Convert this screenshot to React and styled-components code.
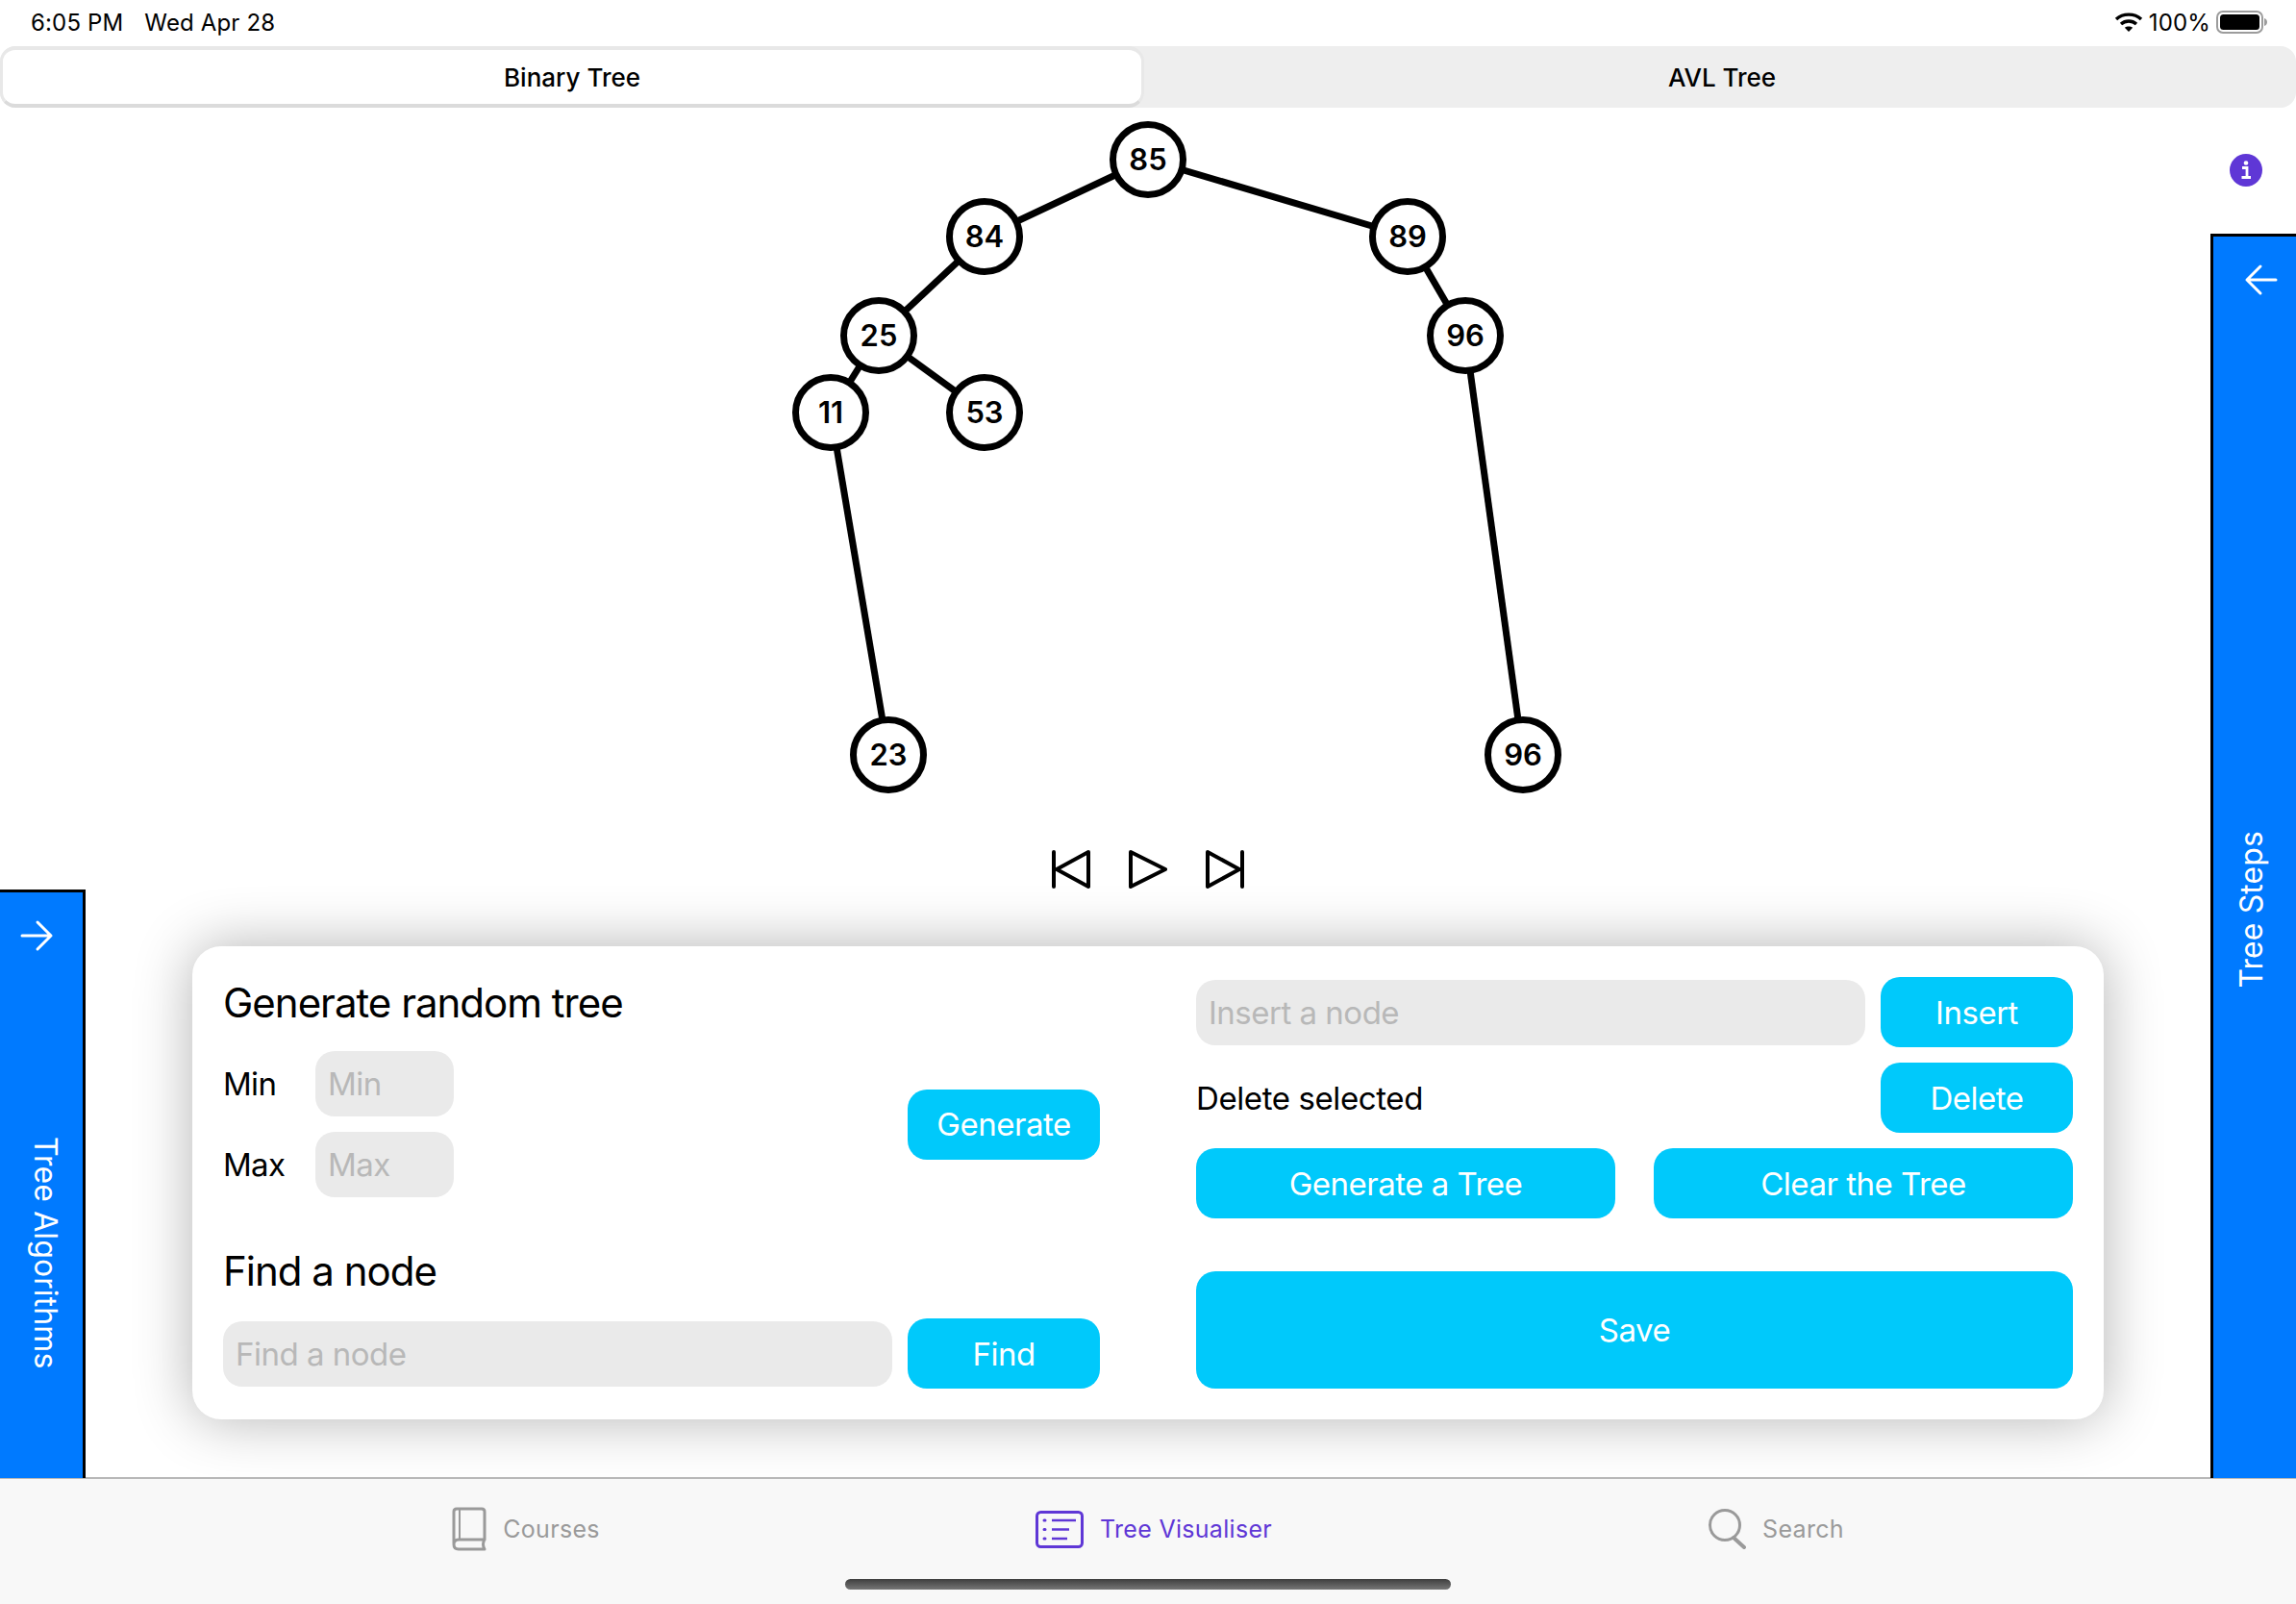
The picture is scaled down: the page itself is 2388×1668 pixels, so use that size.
import React from 'react';
import styled, { createGlobalStyle } from 'styled-components';

const TOP = 112;

const NODES = [
  { id: 'a', label: 85, x: 1194, y: 166 },
  { id: 'b', label: 84, x: 1024, y: 246 },
  { id: 'c', label: 89, x: 1464, y: 246 },
  { id: 'd', label: 25, x: 914, y: 349 },
  { id: 'e', label: 96, x: 1524, y: 349 },
  { id: 'f', label: 11, x: 864, y: 429 },
  { id: 'g', label: 53, x: 1024, y: 429 },
  { id: 'h', label: 23, x: 924, y: 785 },
  { id: 'i', label: 96, x: 1584, y: 785 },
];

const EDGES = [
  ['a', 'b'], ['a', 'c'], ['b', 'd'], ['c', 'e'],
  ['d', 'f'], ['d', 'g'], ['f', 'h'], ['e', 'i'],
];

const nodeById = (id) => NODES.find((n) => n.id === id);

const GlobalStyle = createGlobalStyle`
  html, body {
    margin: 0;
    padding: 0;
    background: #fff;
    overflow: hidden;
  }
  body {
    font-family: Inter, "Liberation Sans", sans-serif;
    color: #000;
  }
  * { box-sizing: border-box; }
`;

const Screen = styled.div`
  position: relative;
  width: 2388px;
  height: 1668px;
  display: flex;
  flex-direction: column;
  overflow: hidden;
  background: #fff;
`;

const StatusBar = styled.div`
  height: 48px;
  padding: 0 29px 2px 32px;
  display: flex;
  align-items: center;
  font-size: 24px;
  letter-spacing: 0.15px;
`;

const StatusTime = styled.span`
  margin-right: 22px;
`;

const StatusRight = styled.div`
  margin-left: auto;
  display: flex;
  align-items: center;
  gap: 6px;
`;

const Tabs = styled.div`
  height: 64px;
  display: grid;
  grid-template-columns: 1fr 1fr;
  background: #eeeeee;
  border-radius: 16px;
`;

const Tab = styled.div`
  display: flex;
  align-items: center;
  justify-content: center;
  font-size: 26px;
  font-weight: 500;
  ${(p) => p.$active && `
    margin-right: 4px;
    background: #fff;
    border-radius: 16px;
    border: 3px solid #e8e8e8;
    border-top-width: 4px;
    border-bottom: 4px solid #dbdbdb;
  `}
`;

const Main = styled.main`
  flex: 1;
  display: flex;
  flex-direction: column;
  min-height: 0;
`;

const Canvas = styled.div`
  position: relative;
  height: 769px;
`;

const Edges = styled.svg`
  position: absolute;
  inset: 0;
  width: 100%;
  height: 100%;
`;

const Node = styled.div`
  position: absolute;
  left: ${(p) => p.$x - 40}px;
  top: ${(p) => p.$y - TOP - 40}px;
  width: 80px;
  height: 80px;
  padding-bottom: 1px;
  border: 7px solid #000;
  border-radius: 50%;
  background: #fff;
  display: flex;
  align-items: center;
  justify-content: center;
  font-size: 31px;
  font-weight: 600;
`;

const InfoBadge = styled.svg`
  position: absolute;
  left: 2319px;
  top: ${160 - TOP}px;
  width: 34px;
  height: 34px;
`;

const Transport = styled.div`
  height: 46px;
  display: flex;
  justify-content: center;
  gap: 40px;
`;

const TransportIcon = styled.svg`
  width: 40px;
  height: 46px;
  fill: none;
  stroke: #000;
  stroke-width: 4px;
  stroke-linecap: round;
  stroke-linejoin: round;
`;

const Panel = styled.section`
  width: 1988px;
  height: 492px;
  margin: 57px auto 0;
  padding: 32px;
  display: grid;
  grid-template-columns: 912px 912px;
  column-gap: 100px;
  background: #fff;
  border-radius: 30px;
  box-shadow: 0 0 60px rgba(0, 0, 0, 0.3);
`;

const Column = styled.div`
  display: flex;
  flex-direction: column;
`;

const Heading = styled.h2`
  margin: ${(p) => p.$top || 0}px 0 0;
  height: 52px;
  line-height: 54px;
  font-size: 42px;
  font-weight: 400;
  letter-spacing: -1px;
`;

const RangeBlock = styled.div`
  margin-top: 25px;
  display: flex;
  align-items: center;
  justify-content: space-between;
`;

const RangeFields = styled.div`
  display: flex;
  flex-direction: column;
  gap: 16px;
`;

const RangeRow = styled.label`
  display: flex;
  align-items: center;
`;

const RangeLabel = styled.span`
  width: 96px;
  font-size: 33px;
  letter-spacing: -0.7px;
`;

const Field = styled.input`
  flex: ${(p) => (p.$small ? 'none' : 1)};
  width: ${(p) => (p.$small ? '144px' : 'auto')};
  min-width: 0;
  height: 68px;
  padding: 0 13px;
  border: 0;
  outline: 0;
  border-radius: 20px;
  background: #eaeaea;
  font-family: inherit;
  font-size: 33px;
  letter-spacing: -0.5px;
  &::placeholder {
    color: #b8b8b8;
    opacity: 1;
  }
`;

const Button = styled.button`
  flex: none;
  width: ${(p) => (p.$wide ? '100%' : '200px')};
  height: ${(p) => (p.$tall ? '122px' : '73px')};
  padding: 0;
  border: 0;
  border-radius: 20px;
  background: #00c9fb;
  color: #fff;
  font-family: inherit;
  font-size: 33px;
  letter-spacing: -0.5px;
`;

const FieldRow = styled.div`
  margin-top: ${(p) => p.$top || 0}px;
  display: flex;
  align-items: center;
  gap: 16px;
`;

const DeleteLabel = styled.span`
  flex: 1;
  font-size: 33px;
  letter-spacing: -0.4px;
`;

const ButtonPair = styled.div`
  margin-top: 16px;
  display: grid;
  grid-template-columns: 1fr 1fr;
  gap: 40px;
`;

const SaveSlot = styled.div`
  margin-top: 55px;
`;

const Drawer = styled.aside`
  position: absolute;
  display: flex;
  flex-direction: column;
  align-items: center;
  background: #007aff;
  color: #fff;
  border-top: 3px solid #000;
  font-size: 32px;
  ${(p) => p.$side === 'left' ? `
    left: 0;
    top: 925px;
    width: 89px;
    height: 612px;
    padding-top: 25px;
    border-right: 3px solid #000;
  ` : `
    left: 2299px;
    top: 243px;
    width: 89px;
    height: 1294px;
    padding-top: 25px;
    border-left: 3px solid #000;
  `}
`;

const DrawerArrow = styled.svg`
  width: 36px;
  height: 40px;
  fill: none;
  stroke: #fff;
  stroke-width: 3px;
  stroke-linecap: round;
  stroke-linejoin: round;
  margin: ${(p) => (p.$side === 'left' ? '0 10px 0 0' : '0 0 0 14px')};
`;

const DrawerLabel = styled.span`
  writing-mode: vertical-rl;
  white-space: nowrap;
  letter-spacing: 0.1px;
  ${(p) => p.$side === 'left' ? `
    margin: 189px 0 0 8px;
  ` : `
    margin: 553px 8px 0 0;
    transform: rotate(180deg);
  `}
`;

const BottomBar = styled.nav`
  position: relative;
  flex: none;
  height: 132px;
  padding: 0 0 0 221px;
  display: grid;
  grid-template-columns: 652px 654px 640px;
  background: #f8f8f8;
  border-top: 2px solid #b8b8b8;
`;

const BarItem = styled.div`
  height: 104px;
  display: flex;
  align-items: center;
  justify-content: center;
  gap: 17px;
  color: ${(p) => (p.$active ? '#5f37d6' : '#9a9a9a')};
  font-size: 25px;
  letter-spacing: 0.3px;
`;

const BarIcon = styled.svg`
  flex: none;
  width: ${(p) => p.$w}px;
  height: ${(p) => p.$h}px;
  fill: none;
  stroke: currentColor;
  stroke-width: 3px;
  stroke-linecap: round;
  stroke-linejoin: round;
`;

const HomeIndicator = styled.div`
  position: absolute;
  left: 879px;
  bottom: 15px;
  width: 630px;
  height: 11px;
  border-radius: 6px;
  background: linear-gradient(#3e3e3e, #767676);
`;

const WifiIcon = () => (
  <svg width="30" height="22" viewBox="0 0 30 22" fill="none" stroke="#000" strokeWidth="3.4" strokeLinecap="butt">
    <path d="M2 8 C9 1.5 21 1.5 28 8" />
    <path d="M7 13 C11.5 9 18.5 9 23 13" />
    <path d="M15 21 L10.8 16.8 C13 14.9 17 14.9 19.2 16.8 Z" fill="#000" stroke="none" />
  </svg>
);

const BatteryIcon = () => (
  <svg width="54" height="24" viewBox="0 0 54 24">
    <rect x="1" y="1" width="47" height="22" rx="6" fill="none" stroke="#9c9c9c" strokeWidth="2" />
    <rect x="4" y="4" width="41" height="16" rx="3.5" fill="#000" />
    <path d="M50 8 C52.5 9 53 10.5 53 12 C53 13.5 52.5 15 50 16 Z" fill="#9c9c9c" />
  </svg>
);

const App = () => (
  <Screen>
    <GlobalStyle />
    <StatusBar>
      <StatusTime>6:05 PM</StatusTime>
      <span>Wed Apr 28</span>
      <StatusRight>
        <WifiIcon />
        <span>100%</span>
        <BatteryIcon />
      </StatusRight>
    </StatusBar>

    <Tabs>
      <Tab $active>Binary Tree</Tab>
      <Tab>AVL Tree</Tab>
    </Tabs>

    <Main>
      <Canvas>
        <Edges>
          {EDGES.map(([from, to]) => {
            const a = nodeById(from);
            const b = nodeById(to);
            return (
              <line
                key={from + to}
                x1={a.x}
                y1={a.y - TOP}
                x2={b.x}
                y2={b.y - TOP}
                stroke="#000"
                strokeWidth="7"
              />
            );
          })}
        </Edges>
        {NODES.map((n) => (
          <Node key={n.id} $x={n.x} $y={n.y}>{n.label}</Node>
        ))}
        <InfoBadge viewBox="0 0 34 34">
          <circle cx="17" cy="17" r="17" fill="#5f37d6" />
          <circle cx="17" cy="9.5" r="2.3" fill="#fff" />
          <path d="M13 14.5 H18 V24 M12.5 24.5 H22" fill="none" stroke="#fff" strokeWidth="2.8" />
        </InfoBadge>
      </Canvas>

      <Transport>
        <TransportIcon viewBox="0 0 40 46">
          <path d="M2 5 V41 M38 5 L5 23 L38 41 Z" />
        </TransportIcon>
        <TransportIcon viewBox="0 0 40 46">
          <path d="M2 5 L38 23 L2 41 Z" />
        </TransportIcon>
        <TransportIcon viewBox="0 0 40 46">
          <path d="M38 5 V41 M2 5 L35 23 L2 41 Z" />
        </TransportIcon>
      </Transport>

      <Panel>
        <Column>
          <Heading>Generate random tree</Heading>
          <RangeBlock>
            <RangeFields>
              <RangeRow>
                <RangeLabel>Min</RangeLabel>
                <Field $small placeholder="Min" />
              </RangeRow>
              <RangeRow>
                <RangeLabel>Max</RangeLabel>
                <Field $small placeholder="Max" />
              </RangeRow>
            </RangeFields>
            <Button>Generate</Button>
          </RangeBlock>
          <Heading $top={50}>Find a node</Heading>
          <FieldRow $top={24}>
            <Field placeholder="Find a node" />
            <Button>Find</Button>
          </FieldRow>
        </Column>

        <Column>
          <FieldRow>
            <Field placeholder="Insert a node" />
            <Button>Insert</Button>
          </FieldRow>
          <FieldRow $top={16}>
            <DeleteLabel>Delete selected</DeleteLabel>
            <Button>Delete</Button>
          </FieldRow>
          <ButtonPair>
            <Button $wide>Generate a Tree</Button>
            <Button $wide>Clear the Tree</Button>
          </ButtonPair>
          <SaveSlot>
            <Button $wide $tall>Save</Button>
          </SaveSlot>
        </Column>
      </Panel>
    </Main>

    <BottomBar>
      <BarItem>
        <BarIcon $w={36} $h={46} viewBox="0 0 36 46">
          <path d="M2 38 V5 Q2 2 5 2 H31 Q34 2 34 5 V34 H7 Q2 34 2 39 Q2 44 7 44 H34 Q31 39 34 34" />
          <path d="M8 2 V34" strokeWidth="2" />
        </BarIcon>
        <span>Courses</span>
      </BarItem>
      <BarItem $active>
        <BarIcon $w={50} $h={39} viewBox="0 0 50 39">
          <rect x="1.5" y="1.5" width="47" height="36" rx="4" />
          <path d="M17 10 H42 M17 19.5 H35 M17 29 H33" strokeWidth="2.6" strokeLinecap="butt" />
          <path d="M9 10 H10 M9 19.5 H10 M9 29 H10" />
        </BarIcon>
        <span>Tree Visualiser</span>
      </BarItem>
      <BarItem>
        <BarIcon $w={40} $h={42} viewBox="0 0 40 42">
          <circle cx="18" cy="17" r="15.5" />
          <path d="M27 30 L38 40" strokeWidth="4" />
        </BarIcon>
        <span>Search</span>
      </BarItem>
      <HomeIndicator />
    </BottomBar>

    <Drawer $side="left">
      <DrawerArrow $side="left" viewBox="0 0 36 40">
        <path d="M3 20 H33 M19 6 L33 20 L19 34" />
      </DrawerArrow>
      <DrawerLabel $side="left">Tree Algorithms</DrawerLabel>
    </Drawer>

    <Drawer $side="right">
      <DrawerArrow $side="right" viewBox="0 0 36 40">
        <path d="M33 20 H3 M17 6 L3 20 L17 34" />
      </DrawerArrow>
      <DrawerLabel $side="right">Tree Steps</DrawerLabel>
    </Drawer>
  </Screen>
);

export default App;
